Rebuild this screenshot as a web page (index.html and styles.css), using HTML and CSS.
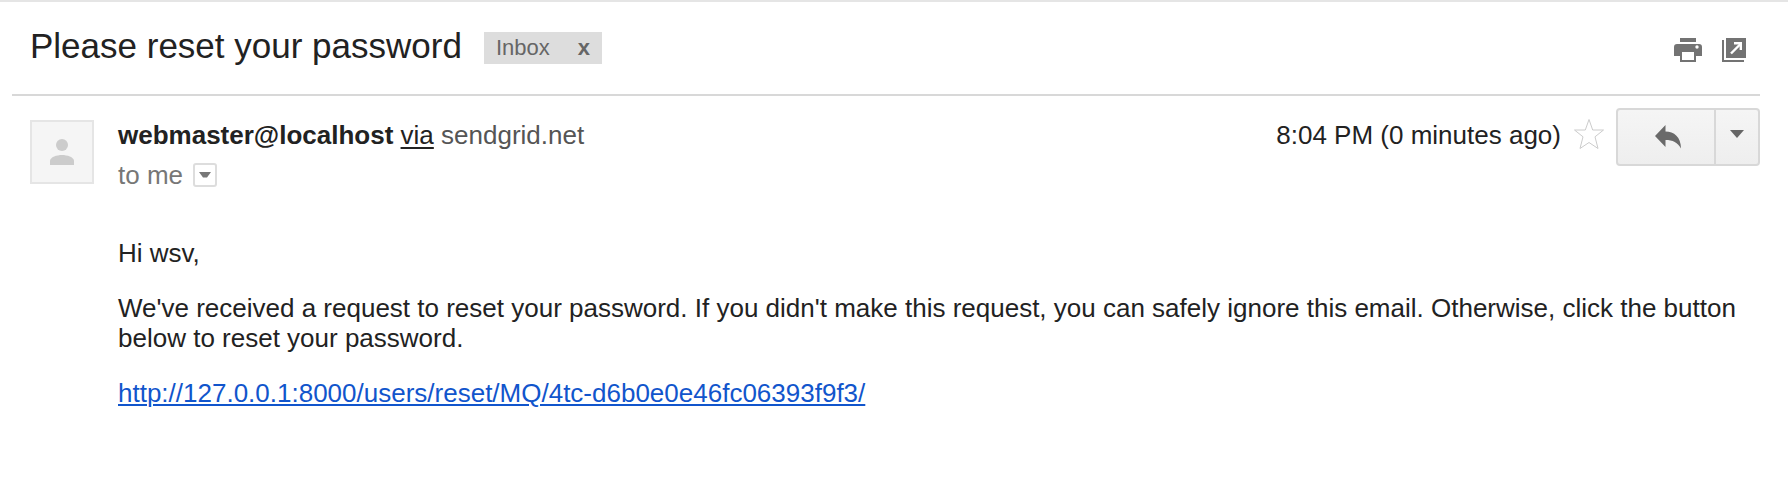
FILE: index.html
```html
<!DOCTYPE html>
<html lang="en">
<head>
<meta charset="utf-8">
<title>Please reset your password</title>
<link rel="stylesheet" href="styles.css">
</head>
<body>
<main class="mail">
  <header class="subject-bar">
    <h1 class="subject">Please reset your password</h1>
    <div class="label">
      <span>Inbox</span>
      <button class="label-remove" type="button" aria-label="Remove label Inbox">x</button>
    </div>
    <div class="tools">
      <button class="tool" type="button" aria-label="Print all">
        <svg width="28" height="24" viewBox="0 0 28 24" aria-hidden="true">
          <path fill="#737373" fill-rule="evenodd" d="M6 0h16v4H6zM3 6h22a3 3 0 0 1 3 3v9h-6v6H6v-6H0V9a3 3 0 0 1 3-3zM8 14v8h12v-8zM23 7.300a1.700 1.700 0 1 0 0 3.400a1.700 1.700 0 1 0 0-3.400z"/>
        </svg>
      </button>
      <button class="tool" type="button" aria-label="In new window">
        <svg width="24" height="24" viewBox="0 0 24 24" aria-hidden="true">
          <path fill="#737373" d="M4 0h20v20H4zM0 2h2v20h20v2H0z"/>
          <path fill="none" stroke="#fff" stroke-width="2.400" d="M9 15.500L18.500 6"/>
          <path fill="#fff" d="M12 4h8v8h-2.400V6.400H12z"/>
        </svg>
      </button>
    </div>
  </header>

  <article class="message">
    <div class="avatar">
      <svg width="24" height="26" viewBox="0 0 24 26" aria-hidden="true">
        <circle cx="12" cy="6" r="6" fill="#ccc"/>
        <path fill="#ccc" d="M0 26v-4c0-4 7-6 12-6s12 2 12 6v4z"/>
      </svg>
    </div>
    <div class="content">
      <div class="meta">
        <div class="people">
          <div class="from"><strong>webmaster@localhost</strong> <a class="via" href="#via">via</a> <span class="domain">sendgrid.net</span></div>
          <div class="to">to me
            <button class="details" type="button" aria-label="Show details">
              <svg width="12" height="6" viewBox="0 0 12 6" aria-hidden="true"><path fill="#777" d="M0 0h12L8 5.500H4z"/></svg>
            </button>
          </div>
        </div>
        <div class="actions">
          <time class="time">8:04 PM (0 minutes ago)</time>
          <button class="star" type="button" aria-label="Star">
            <svg width="32" height="32" viewBox="0 0 32 32" aria-hidden="true">
              <path fill="#fff" stroke="#ccc" d="M16 1.500L19.700 12H30.500L22 18.800L25 30.500L16 24.500L7 30.500L10 18.800L1.500 12H12.300z"/>
            </svg>
          </button>
          <div class="split">
            <button class="reply" type="button" aria-label="Reply">
              <svg width="27" height="24" viewBox="0 0 27 24" aria-hidden="true"><path fill="#6a6a6a" d="M10.500 0v6.500C19 6.500 26 12 26 23.500C23 17.500 17.500 15 10.500 15v7L0 11z"/></svg>
            </button>
            <button class="more" type="button" aria-label="More">
              <svg width="14" height="8" viewBox="0 0 14 8" aria-hidden="true"><path fill="#666" d="M0 0h14L7 8z"/></svg>
            </button>
          </div>
        </div>
      </div>
      <div class="body">
        <p>Hi wsv,</p>
        <p>We've received a request to reset your password. If you didn't make this request, you can safely ignore this email. Otherwise, click the button below to reset your password.</p>
        <p><a class="reset-link" href="http://127.0.0.1:8000/users/reset/MQ/4tc-d6b0e0e46fc06393f9f3/">http://127.0.0.1:8000/users/reset/MQ/4tc-d6b0e0e46fc06393f9f3/</a></p>
      </div>
    </div>
  </article>
</main>
</body>
</html>
```
FILE: styles.css
```css
* { box-sizing: border-box; }

body {
  margin: 0;
  background: #fff;
  color: #222;
  font: 26px/30px "Liberation Sans", Arial, sans-serif;
}

button {
  display: flex;
  align-items: center;
  justify-content: center;
  margin: 0;
  padding: 0;
  border: 0;
  background: none;
  color: inherit;
  font: inherit;
  cursor: pointer;
}

svg { display: block; }

.mail {
  border-top: 2px solid #e5e5e5;
  padding: 0 28px 0 12px;
}

.subject-bar {
  display: flex;
  align-items: flex-start;
  padding: 24px 14px 28px 18px;
  border-bottom: 2px solid #d8d8d8;
}

.subject {
  margin: 0;
  font-size: 35px;
  line-height: 40px;
  font-weight: 400;
}

.label {
  display: flex;
  align-items: center;
  gap: 28px;
  height: 32px;
  margin: 6px 0 0 22px;
  padding: 0 12px;
  background: #ddd;
  color: #666;
  font-size: 22px;
}

.label-remove { font-weight: 700; }

.tools {
  display: flex;
  gap: 20px;
  margin: 12px 0 0 auto;
}

.message {
  display: flex;
  align-items: flex-start;
  gap: 24px;
  padding: 12px 0 0 18px;
}

.avatar {
  display: flex;
  flex: none;
  align-items: center;
  justify-content: center;
  width: 64px;
  height: 64px;
  margin-top: 12px;
  border: 2px solid #e5e5e5;
  background: #f5f5f5;
}

.content { flex: 1; min-width: 0; }

.meta {
  display: flex;
  align-items: flex-start;
  justify-content: space-between;
}

.people { padding-top: 12px; }

.via { color: #222; text-underline-offset: 3px; text-decoration-thickness: 2px; }

.domain { color: #555; }

.to {
  display: flex;
  align-items: center;
  gap: 10px;
  margin-top: 10px;
  color: #777;
}

.details {
  width: 24px;
  height: 24px;
  border: 2px solid #ddd;
  border-radius: 3px;
}

.actions { display: flex; align-items: flex-start; }

.time { padding-top: 12px; }

.star { margin: 10px 11px 0 12px; }

.split {
  display: flex;
  height: 58px;
  border: 2px solid #d8d8d8;
  border-radius: 4px;
  background: linear-gradient(#f5f5f5, #eee);
}

.reply { width: 96px; padding-left: 4px; }

.more {
  width: 44px;
  padding-bottom: 6px;
  border-left: 2px solid #d8d8d8;
}

.body { padding: 48px 16px 40px 0; }

.body p { margin: 0 0 25px; }

.reset-link {
  color: #15c;
  text-decoration-thickness: 2px;
  text-underline-offset: 2px;
}
```
